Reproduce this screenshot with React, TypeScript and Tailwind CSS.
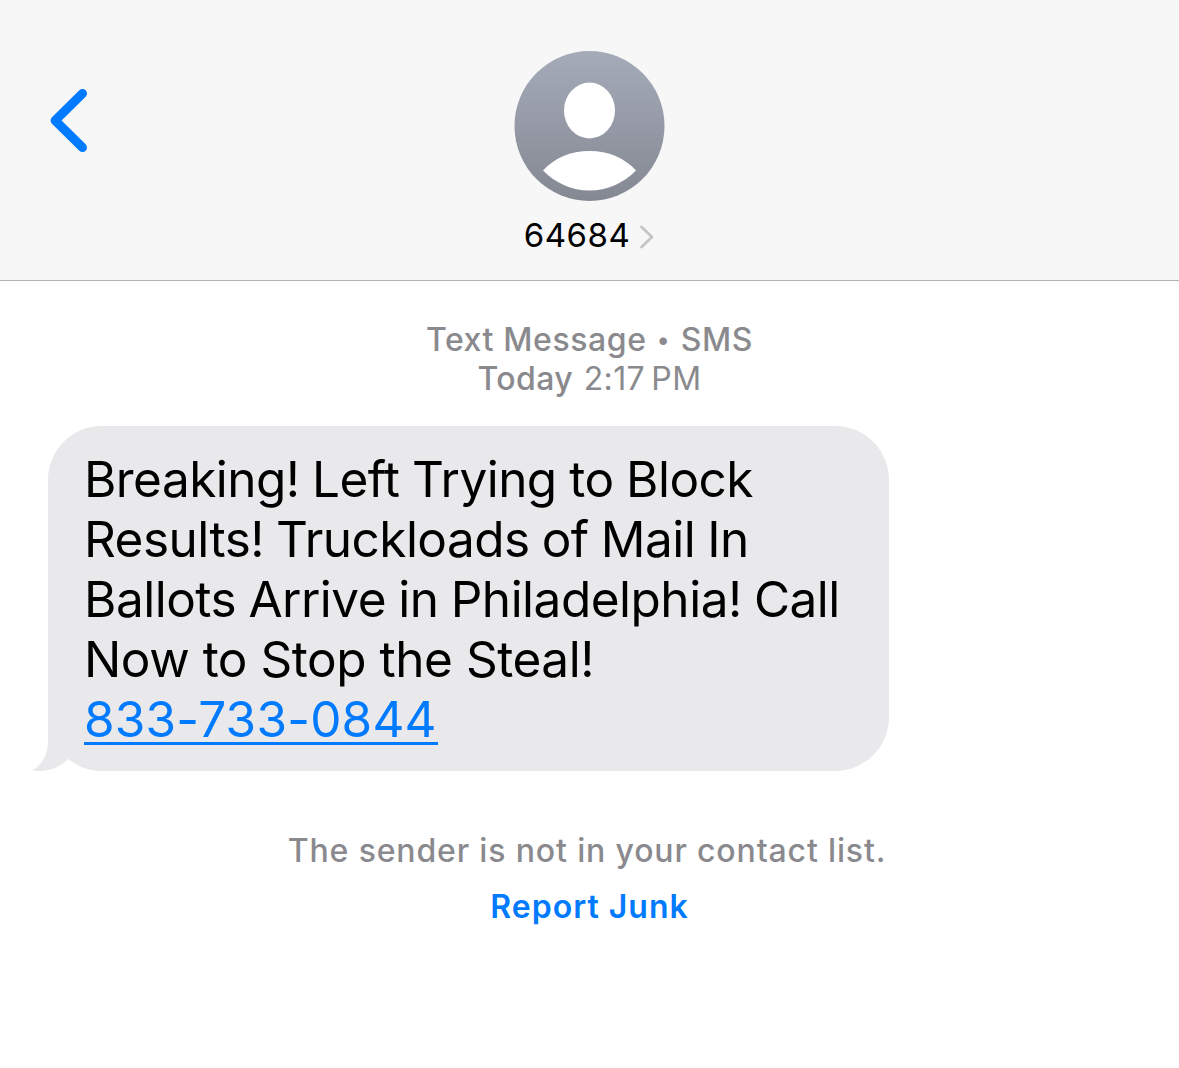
import React from 'react';

const lines = [
  { text: 'Breaking! Left Trying to Block', spacing: 'tracking-[-0.55px] [word-spacing:-0.8px]' },
  { text: 'Results! Truckloads of Mail In', spacing: 'tracking-[-0.53px] [word-spacing:-1.3px]' },
  { text: 'Ballots Arrive in Philadelphia! Call', spacing: 'tracking-[-0.5px] [word-spacing:-1.2px]' },
  { text: 'Now to Stop the Steal!', spacing: 'tracking-[-0.47px]' },
];

function Avatar() {
  return (
    <svg className="h-[150px] w-[151px]" viewBox="0 0 151 150">
      <defs>
        <linearGradient id="avatar" x1="0" y1="0" x2="0" y2="1">
          <stop offset="0" stopColor="#a5abb9" />
          <stop offset="1" stopColor="#848892" />
        </linearGradient>
      </defs>
      <circle cx="75.5" cy="75" r="75" fill="url(#avatar)" />
      <ellipse cx="75.5" cy="59.5" rx="25.5" ry="28" fill="#fff" />
      <path d="M29 119.5C40.5 107 56.5 100 75.500 100s35 7 46.500 19.500C109.500 132 93.500 139.500 75.500 139.500s-34-7.500-46.500-20z" fill="#fff" />
    </svg>
  );
}

function Header() {
  return (
    <header className="grid h-[281px] grid-cols-[1fr_auto_1fr] items-start border-b border-[#b2b2b2] bg-[#f7f7f7]">
      <button aria-label="Back" className="mt-[88px] ml-[48px] w-[42px]">
        <svg className="h-[65px] w-[42px]" viewBox="0 0 42 65" fill="none" stroke="#007aff" strokeWidth="9" strokeLinecap="round" strokeLinejoin="round">
          <path d="M34.5 5.5L7.1 32.5L34.5 59.5" />
        </svg>
      </button>

      <div className="flex flex-col items-center pt-[51px]">
        <Avatar />
        <div className="mt-[14px] flex items-center">
          <span className="text-[33px] leading-10 tracking-[0.5px] text-black">64684</span>
          <svg className="mt-[3px] ml-[9px] h-[24px] w-[16px]" viewBox="0 0 16 24" fill="none" stroke="#c5c5c7" strokeWidth="2.8" strokeLinecap="round" strokeLinejoin="round">
            <path d="M2.5 2L13 12L2.5 22" />
          </svg>
        </div>
      </div>
    </header>
  );
}

function Bubble() {
  return (
    <div className="relative mt-[28px] ml-[48px] h-[345px] w-[841px] rounded-[54px] bg-[#e9e9eb] pt-[23px] pl-[36px] text-[49.5px] leading-[60px] text-black">
      <svg className="absolute bottom-0 -left-[16px] h-[60px] w-[60px]" viewBox="0 0 60 60">
        <path d="M16 0V30C16 44 10 54 0 59.5C14 61.5 26 58 35.5 48.5L50 30V0z" fill="#e9e9eb" />
      </svg>
      <div className="relative whitespace-nowrap">
        {lines.map((line) => (
          <p key={line.text} className={line.spacing}>{line.text}</p>
        ))}
        <a href="tel:8337330844" className="block w-[354px] tracking-[0.2px] text-[#007aff]">
          833-733-0844
          <span className="-mt-[7px] block h-[3px] bg-[#007aff]" />
        </a>
      </div>
    </div>
  );
}

export default function App() {
  return (
    <div className="h-[1068px] w-[1179px] overflow-hidden bg-white font-['Inter',sans-serif]">
      <Header />
      <main>
        <div className="pt-[39px] text-center text-[32px] leading-[39px] font-medium text-[#8a8a8e]">
          <p className="flex items-center justify-center tracking-[0.6px]">
            Text Message
            <span className="mt-px mr-[15px] ml-[10px] w-[9px] text-center text-[24px] leading-[38px] tracking-normal">•</span>
            SMS
          </p>
          <p>
            <span className="mr-[2px] tracking-[0.4px]">Today</span>{' '}
            <span className="font-normal tracking-[0.4px]">2:17&#8239;PM</span>
          </p>
        </div>
        <Bubble />
        <div className="mt-[60px] flex flex-col items-center text-[32px] leading-10">
          <p className="mr-[5px] font-medium tracking-[0.85px] text-[#8a8a8e]">The sender is not in your contact list.</p>
          <button className="mt-[16px] font-semibold tracking-[1px] text-[#007aff]">Report Junk</button>
        </div>
      </main>
    </div>
  );
}
